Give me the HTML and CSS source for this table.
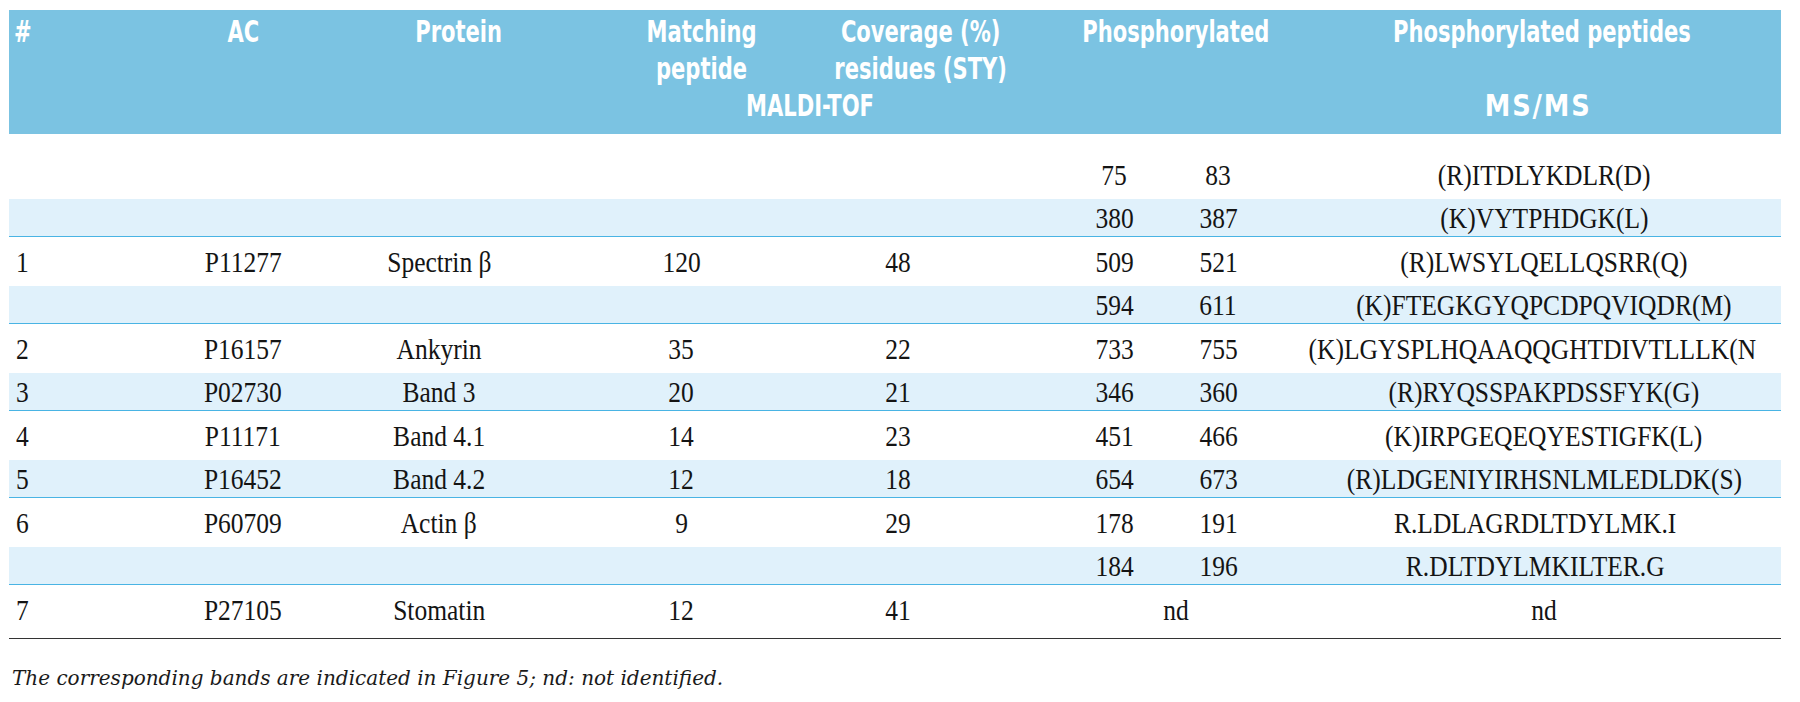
FILE: index.html
```html
<!DOCTYPE html>
<html lang="en">
<head>
<meta charset="utf-8">
<title>Phosphorylated membrane proteins</title>
<link rel="stylesheet" href="styles.css">
</head>
<body>
<div class="page">
  <div class="table">
    <div class="head">
      <div class="h h-num"><span>#</span></div>
      <div class="h h-ac"><span>AC</span></div>
      <div class="h h-prot"><span>Protein</span></div>
      <div class="h h-match"><span>Matching<br>peptide</span></div>
      <div class="h h-cov"><span>Coverage (%)<br>residues (STY)</span></div>
      <div class="h h-phos"><span>Phosphorylated</span></div>
      <div class="h h-pep"><span>Phosphorylated peptides</span></div>
      <div class="h h-maldi"><span>MALDI-TOF</span></div>
      <div class="h h-msms"><span>MS/MS</span></div>
    </div>

    <div class="row">
      <div class="c"></div><div class="c"></div><div class="c"></div><div class="c"></div><div class="c c-cov"></div>
      <div class="c"><span>75</span></div><div class="c"><span>83</span></div><div class="c c-pep"><span>(R)ITDLYKDLR(D)</span></div>
    </div>
    <div class="row shade">
      <div class="c"></div><div class="c"></div><div class="c"></div><div class="c"></div><div class="c c-cov"></div>
      <div class="c"><span>380</span></div><div class="c"><span>387</span></div><div class="c c-pep"><span>(K)VYTPHDGK(L)</span></div>
    </div>
    <div class="row">
      <div class="c c-num"><span>1</span></div><div class="c"><span>P11277</span></div><div class="c"><span>Spectrin β</span></div><div class="c"><span>120</span></div><div class="c c-cov"><span>48</span></div>
      <div class="c"><span>509</span></div><div class="c"><span>521</span></div><div class="c c-pep"><span>(R)LWSYLQELLQSRR(Q)</span></div>
    </div>
    <div class="row shade">
      <div class="c"></div><div class="c"></div><div class="c"></div><div class="c"></div><div class="c c-cov"></div>
      <div class="c"><span>594</span></div><div class="c"><span>611</span></div><div class="c c-pep"><span>(K)FTEGKGYQPCDPQVIQDR(M)</span></div>
    </div>
    <div class="row">
      <div class="c c-num"><span>2</span></div><div class="c"><span>P16157</span></div><div class="c"><span>Ankyrin</span></div><div class="c"><span>35</span></div><div class="c c-cov"><span>22</span></div>
      <div class="c"><span>733</span></div><div class="c"><span>755</span></div><div class="c c-pep c-wide"><span>(K)LGYSPLHQAAQQGHTDIVTLLLK(N</span></div>
    </div>
    <div class="row shade">
      <div class="c c-num"><span>3</span></div><div class="c"><span>P02730</span></div><div class="c"><span>Band 3</span></div><div class="c"><span>20</span></div><div class="c c-cov"><span>21</span></div>
      <div class="c"><span>346</span></div><div class="c"><span>360</span></div><div class="c c-pep"><span>(R)RYQSSPAKPDSSFYK(G)</span></div>
    </div>
    <div class="row">
      <div class="c c-num"><span>4</span></div><div class="c"><span>P11171</span></div><div class="c"><span>Band 4.1</span></div><div class="c"><span>14</span></div><div class="c c-cov"><span>23</span></div>
      <div class="c"><span>451</span></div><div class="c"><span>466</span></div><div class="c c-pep"><span>(K)IRPGEQEQYESTIGFK(L)</span></div>
    </div>
    <div class="row shade">
      <div class="c c-num"><span>5</span></div><div class="c"><span>P16452</span></div><div class="c"><span>Band 4.2</span></div><div class="c"><span>12</span></div><div class="c c-cov"><span>18</span></div>
      <div class="c"><span>654</span></div><div class="c"><span>673</span></div><div class="c c-pep"><span>(R)LDGENIYIRHSNLMLEDLDK(S)</span></div>
    </div>
    <div class="row">
      <div class="c c-num"><span>6</span></div><div class="c"><span>P60709</span></div><div class="c"><span>Actin β</span></div><div class="c"><span>9</span></div><div class="c c-cov"><span>29</span></div>
      <div class="c"><span>178</span></div><div class="c"><span>191</span></div><div class="c c-pep c-dot"><span>R.LDLAGRDLTDYLMK.I</span></div>
    </div>
    <div class="row shade">
      <div class="c"></div><div class="c"></div><div class="c"></div><div class="c"></div><div class="c c-cov"></div>
      <div class="c"><span>184</span></div><div class="c"><span>196</span></div><div class="c c-pep c-dot"><span>R.DLTDYLMKILTER.G</span></div>
    </div>
    <div class="row last">
      <div class="c c-num"><span>7</span></div><div class="c"><span>P27105</span></div><div class="c"><span>Stomatin</span></div><div class="c"><span>12</span></div><div class="c c-cov"><span>41</span></div>
      <div class="c c-nd"><span>nd</span></div><div class="c c-pep"><span>nd</span></div>
    </div>
  </div>
  <p class="note">The corresponding bands are indicated in Figure 5; nd: not identified.</p>
</div>
</body>
</html>
```

FILE: styles.css
```css
html, body {
  margin: 0;
  padding: 0;
  background: #ffffff;
}

.page {
  padding: 10px 19px 0 9px;
}

.table {
  display: flex;
  flex-direction: column;
  width: 1772px;
}

.head {
  display: grid;
  grid-template-columns: 136px 196px 196px 288px 237px 104px 104px 511px;
  grid-template-rows: 74px 38px;
  height: 124px;
  box-sizing: border-box;
  padding-top: 3px;
  margin-bottom: 16px;
  background: #7bc3e2;
  color: #ffffff;
  font-family: "DejaVu Sans Condensed", "DejaVu Sans", "Liberation Sans", sans-serif;
  font-stretch: condensed;
  font-weight: 700;
  font-size: 30px;
  line-height: 37px;
}

.h {
  display: flex;
  justify-content: center;
  align-items: flex-start;
  text-align: center;
  white-space: nowrap;
  min-width: 0;
}

.h span {
  display: inline-block;
  flex: none;
  transform: scaleX(0.78);
  transform-origin: 50% 50%;
}

.h-num { justify-content: flex-start; padding-left: 5px; grid-column: 1; grid-row: 1; }
.h-num span { transform-origin: 0 50%; }
.h-ac { grid-column: 2; grid-row: 1; }
.h-prot { grid-column: 3; grid-row: 1; padding-left: 40px; }
.h-match { grid-column: 4; grid-row: 1; padding-left: 40px; }
.h-cov { grid-column: 5; grid-row: 1; padding-right: 45px; }
.h-phos { grid-column: 6 / 8; grid-row: 1; padding-left: 20px; }
.h-pep { grid-column: 8; grid-row: 1; padding-left: 33px; }
.h-maldi { grid-column: 4 / 6; grid-row: 2; padding-left: 21px; }
.h-msms { grid-column: 8; grid-row: 2; padding-left: 25px; }
.h-msms span { letter-spacing: 2px; transform: scaleX(0.95); }

.row {
  display: grid;
  grid-template-columns: 136px 196px 196px 288px 237px 104px 104px 511px;
  height: 43.5px;
  box-sizing: border-box;
  padding-top: 5.5px;
  border-bottom: 1px solid transparent;
  background-clip: content-box;
  font-family: "Liberation Serif", "DejaVu Serif", serif;
  font-size: 30px;
  color: #141414;
}

.row.shade {
  background-color: #e0f1fb;
  border-bottom-color: #49b4e4;
}

.row.last {
  height: 54px;
  padding-bottom: 10.5px;
  border-bottom-color: #333333;
}

.c {
  display: flex;
  align-items: center;
  justify-content: center;
  white-space: nowrap;
  line-height: 37px;
  padding-bottom: 7px;
  min-width: 0;
}

.c span {
  display: inline-block;
  flex: none;
  transform: scaleX(0.85);
  transform-origin: 50% 50%;
}

.c-num {
  justify-content: flex-start;
  padding-left: 7px;
}

.c-num span { transform-origin: 0 50%; }

.c-cov { padding-right: 91px; }
.c-pep { padding-left: 37px; }
.c-pep.c-wide { padding-left: 13px; }
.c-pep.c-dot { padding-left: 19px; }
.c-nd { grid-column: 6 / 8; padding-left: 20px; }

.note {
  margin: 27px 0 0 3px;
  font-family: "DejaVu Serif", serif;
  font-style: italic;
  font-size: 20px;
  line-height: 24px;
  color: #1a1a1a;
}
```
